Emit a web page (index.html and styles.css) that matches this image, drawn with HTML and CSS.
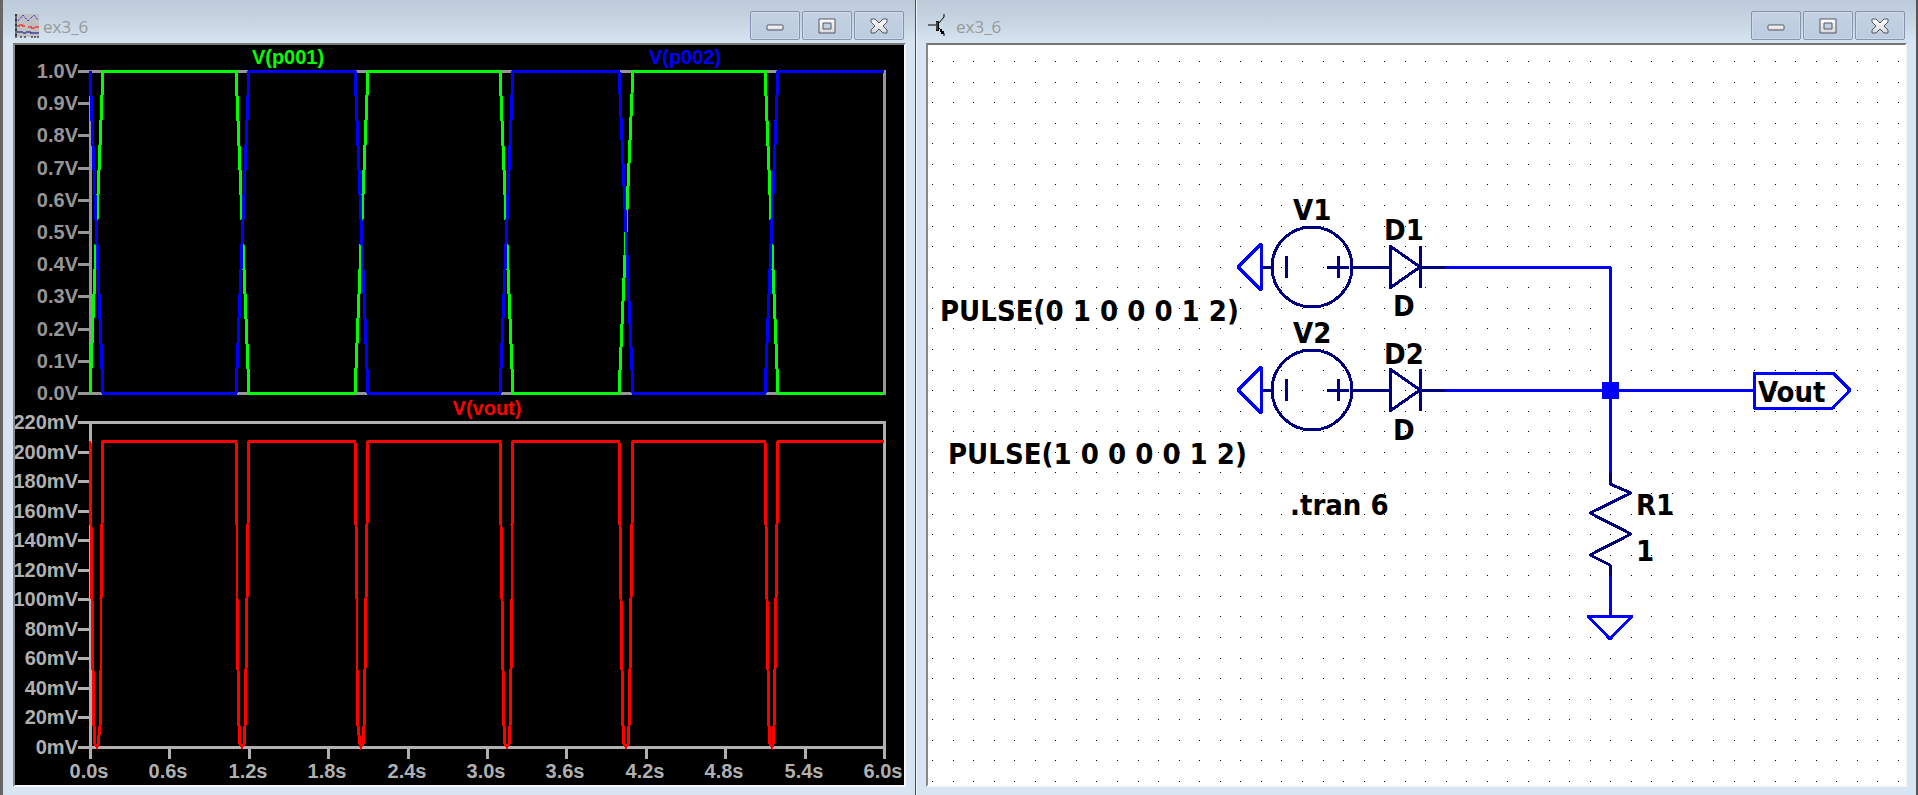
FILE: index.html
```html
<!DOCTYPE html>
<html lang="en">
<head>
    <meta charset="UTF-8">
    <meta name="viewport" content="width=device-width, initial-scale=1.0">
    <title>ex3_6</title>
    <link rel="stylesheet" href="styles.css">
</head>
<body>
    <!-- icons shared by both title bars -->
    <svg class="defs" aria-hidden="true">
        <defs>
            <linearGradient id="face" x1="0" y1="0" x2="0" y2="1">
                <stop offset="0" stop-color="#ffffff"/>
                <stop offset="1" stop-color="#d8d8d8"/>
            </linearGradient>
            <symbol id="icon-min" viewBox="0 0 20 18">
                <rect x="2" y="8" width="16" height="5" rx="1" fill="url(#face)" stroke="#535666"/>
            </symbol>
            <symbol id="icon-max" viewBox="0 0 20 18">
                <path d="M2 2H18V16H2ZM6 6V12H14V6Z" fill="url(#face)" fill-rule="evenodd" stroke="#535666" stroke-linejoin="round"/>
            </symbol>
            <symbol id="icon-close" viewBox="0 0 20 18">
                <path d="M2 2H6L10 6L14 2H18V5L14 9L18 13V16H14L10 12L6 16H2V13L6 9L2 5Z" fill="url(#face)" stroke="#535666" stroke-linejoin="round"/>
            </symbol>
        </defs>
    </svg>

    <main class="workspace">
        <section class="window window-plot">
            <header class="titlebar">
                <svg class="app-icon" viewBox="0 0 24 24">
                    <rect x="2" width="22" height="23" fill="#c0c0c0"/>
                    <path d="M1 0V24M0 1H2M0 6H2M0 11H2M0 16H2M0 21H2M6 22V24M10 22V24M17 22V24M20 22V24M23 22V24" stroke="#000" stroke-width="1"/>
                    <path d="M3 7L8 1L13 7L19 1L23 6" fill="none" stroke="#0000e0" stroke-width="1" stroke-dasharray="1 1"/>
                    <path d="M2 12H5M4 11H8M7 12H10M13 13H17M16 14H20M20 13H24" stroke="#f00" stroke-width="1"/>
                    <path d="M2 18H8M8 19H11M11 18H16M15 19H24" stroke="#000080" stroke-width="1"/>
                </svg>
                <h1 class="title">ex3_6</h1>
                <div class="controls">
                    <button class="control" type="button" aria-label="Minimize"><svg class="glyph"><use href="#icon-min"/></svg></button>
                    <button class="control" type="button" aria-label="Maximize"><svg class="glyph"><use href="#icon-max"/></svg></button>
                    <button class="control" type="button" aria-label="Close"><svg class="glyph"><use href="#icon-close"/></svg></button>
                </div>
            </header>
            <div class="client client-plot">
                <svg id="plot" class="canvas" viewBox="0 0 889 740" role="img" aria-label="Waveforms"></svg>
            </div>
        </section>

        <section class="window window-schematic">
            <header class="titlebar">
                <svg class="app-icon" viewBox="0 0 24 24">
                    <path d="M0 11H9" stroke="#000" stroke-width="1"/>
                    <rect x="8" y="7" width="3" height="10" fill="#000"/>
                    <path d="M9 8V16" stroke="#808080" stroke-width="1"/>
                    <path d="M11 9L16 3V0M11 14L16 19V22" fill="none" stroke="#000" stroke-width="1"/>
                    <path d="M12 15H14V17H16V20H13V18H12Z" fill="#000"/>
                </svg>
                <h1 class="title">ex3_6</h1>
                <div class="controls">
                    <button class="control" type="button" aria-label="Minimize"><svg class="glyph"><use href="#icon-min"/></svg></button>
                    <button class="control" type="button" aria-label="Maximize"><svg class="glyph"><use href="#icon-max"/></svg></button>
                    <button class="control" type="button" aria-label="Close"><svg class="glyph"><use href="#icon-close"/></svg></button>
                </div>
            </header>
            <div class="client client-schematic">
                <svg class="canvas" viewBox="0 0 977 740" role="img" aria-label="Schematic">
                    <defs>
                        <!-- grounded source in series with a diode, origin at the ground tip -->
                        <g id="branch">
                            <path class="wire" d="M0 0L23 -23V23Z"/>
                            <path class="part" d="M25 0H34M48 -11V11M89 0H111M100 -11V11M115 0H152M152 -21V21L182 0ZM182 -21V21M182 0H208"/>
                            <circle class="part" cx="74" cy="0" r="40"/>
                        </g>
                    </defs>
                    <path id="grid" class="grid"/>
                    <use href="#branch" x="310" y="222"/>
                    <use href="#branch" x="310" y="345"/>
                    <path class="wire" d="M518 222H682V429M518 345H826M682 530V571"/>
                    <path class="wire" d="M660 571H704L682 594Z"/>
                    <path class="wire" d="M826 328H905L922 345L905 363H826Z"/>
                    <path class="part" d="M682 428V439L703 448L662 468L703 489L662 510L682 520V531"/>
                    <rect class="node" x="674" y="337" width="17" height="17"/>
                    <g class="label">
                        <text x="365" y="175">V1</text>
                        <text x="456" y="195">D1</text>
                        <text x="465" y="271">D</text>
                        <text x="12" y="276">PULSE(0 1 0 0 0 1 2)</text>
                        <text x="365" y="298">V2</text>
                        <text x="456" y="319">D2</text>
                        <text x="465" y="395">D</text>
                        <text x="20" y="419">PULSE(1 0 0 0 0 1 2)</text>
                        <text x="362" y="470">.tran 6</text>
                        <text x="830" y="357">Vout</text>
                        <text x="708" y="470">R1</text>
                        <text x="708" y="516">1</text>
                    </g>
                </svg>
            </div>
        </section>
    </main>
    <script src="app.js"></script>
</body>
</html>
```
FILE: styles.css
```css
* {
    box-sizing: border-box;
}
body {
    margin: 0;
    background: #d7e4f2;
    font-family: "Open Sans", "Noto Sans", sans-serif;
}
.defs {
    position: absolute;
    width: 0;
    height: 0;
}
.workspace {
    display: grid;
    grid-template-columns: 916fr 1002fr;
    height: 100vh;
}
.window {
    display: flex;
    flex-direction: column;
    min-width: 0;
    padding-bottom: 8px;
    background: linear-gradient(#bccad9, #c9d6e4 24px, #d7e4f2 43px);
}
.window-plot {
    padding-left: 10px;
    padding-right: 9px;
    border-left: 3px solid #666;
    border-right: 1px solid #4c4c4c;
}
.window-schematic {
    padding-left: 9px;
    padding-right: 9px;
    border-left: 1px solid #f4f8fc;
    border-right: 2px solid #555;
}
.titlebar {
    display: flex;
    align-items: center;
    height: 43px;
    padding: 8px 2px 0;
}
.app-icon {
    width: 24px;
    height: 24px;
}
.title {
    margin: 2px auto 0 4px;
    color: #999;
    font-size: 17px;
    font-weight: 400;
    line-height: 24px;
}
.controls {
    display: flex;
    gap: 2px;
}
.control {
    display: flex;
    align-items: center;
    justify-content: center;
    width: 50px;
    height: 29px;
    padding: 0;
    border: 1px solid #8593ae;
    border-radius: 2px;
    background: linear-gradient(#c4d2e2, #bccbde);
    box-shadow: inset 0 0 0 1px #ccd9e8;
}
.glyph {
    width: 20px;
    height: 18px;
}
.client {
    flex: 1;
    min-height: 0;
    border: 2px solid #f8f8f8;
    border-top-color: #777;
    border-left-color: #888;
}
.client-plot {
    background: #000;
}
.client-schematic {
    background: #fff;
}
.canvas {
    display: block;
    width: 100%;
    height: 100%;
}

/* waveform window */
.axis,
.trace {
    fill: none;
    stroke-width: 3px;
    shape-rendering: crispEdges;
}
.tick-label,
.trace-label {
    font-family: "Liberation Sans", Arial, sans-serif;
    font-size: 20px;
    font-weight: 700;
}
.trace-label,
.time-label {
    text-anchor: middle;
}
.value-label {
    text-anchor: end;
}
.upper {
    stroke: #969696;
}
.lower {
    stroke: #b0b0b0;
}
.tick-label.upper {
    fill: #969696;
    stroke: none;
}
.tick-label.lower {
    fill: #b0b0b0;
    stroke: none;
}

/* schematic window */
.grid {
    fill: #000;
    shape-rendering: crispEdges;
}
.wire,
.part {
    fill: none;
    stroke-width: 3px;
    stroke-linejoin: round;
    shape-rendering: crispEdges;
}
.wire {
    stroke: #00f;
}
.part {
    stroke: #000080;
}
.node {
    fill: #00f;
}
.label {
    font-family: "DejaVu Sans Condensed", "DejaVu Sans", sans-serif;
    font-size: 29px;
    font-weight: 700;
}
```
FILE: app.js
```js
const SVG_NS = 'http://www.w3.org/2000/svg';
const plot = document.getElementById('plot');

const LEFT = 75;
const RIGHT = 869;
const T_END = 6;
const upper = { top: 26, bottom: 348, max: 1, name: 'upper' };
const lower = { top: 377, bottom: 702, max: 220, name: 'lower' };

function add(tag, attrs, text) {
    const el = document.createElementNS(SVG_NS, tag);
    for (const key in attrs) el.setAttribute(key, attrs[key]);
    if (text) el.textContent = text;
    plot.appendChild(el);
}

const timeX = t => Math.round(LEFT + t / T_END * (RIGHT - LEFT));
const valueY = (pane, v) => Math.round(pane.bottom - v / pane.max * (pane.bottom - pane.top));

function drawPane(pane, count, format) {
    let d = `M${LEFT} ${pane.top}H${RIGHT}V${pane.bottom}H${LEFT}Z`;
    for (let i = 0; i <= count; i++) {
        const y = valueY(pane, pane.max * i / count);
        d += `M${LEFT - 12} ${y}H${LEFT}`;
        add('text', { class: `tick-label value-label ${pane.name}`, x: LEFT - 12, y: y + 7 }, format(i));
    }
    add('path', { class: `axis ${pane.name}`, d });
}

function drawTrace(pane, points, color, label, labelX) {
    const d = points.map(([t, v]) => `${timeX(t)} ${valueY(pane, v)}`).join('L');
    add('path', { class: 'trace', stroke: color, d: 'M' + d });
    add('text', { class: 'trace-label', fill: color, x: labelX, y: pane.top - 7 }, label);
}

drawPane(upper, 10, i => (i / 10).toFixed(1) + 'V');
drawPane(lower, 11, i => i * 20 + 'mV');

// time axis
for (let i = 0; i <= 10; i++) {
    const x = timeX(i * 0.6);
    add('path', { class: 'axis lower', d: `M${x} ${lower.bottom}V${lower.bottom + 12}` });
    add('text', { class: 'tick-label time-label lower', x: x - 1, y: lower.bottom + 31 }, (i * 0.6).toFixed(1) + 's');
}

// period 2s, 0.1s edges; the second source is the inverse of the first
const pulse = [];
for (let t = 0; t < T_END; t += 2) {
    pulse.push([t, 0], [t + 0.1, 1], [t + 1.1, 1], [t + 1.2, 0]);
}
pulse.push([T_END, 0]);
drawTrace(upper, pulse, '#00ff00', 'V(p001)', 273);
drawTrace(upper, pulse.map(([t, v]) => [t, 1 - v]), '#0000ff', 'V(p002)', 670);

// output dips whenever the two sources cross: [seconds from centre, mV]
const dip = [[0.05, 207], [0.042, 150], [0.036, 100], [0.03, 52], [0.022, 14], [0.013, 2], [0, 0]];
const vout = [];
for (const centre of [0.05, 1.15, 2.05, 3.15, 4.05, 5.15]) {
    dip.forEach(([dt, v]) => vout.push([centre - dt, v]));
    dip.slice().reverse().forEach(([dt, v]) => vout.push([centre + dt, v]));
}
vout.push([T_END, 207]);
drawTrace(lower, vout, '#ff0000', 'V(vout)', 472);

// schematic grid dots, snapped to whole pixels
let dots = '';
for (let row = 0; row < 36; row++) {
    for (let col = 0; col < 48; col++) {
        const x = Math.round(4 + col * 966 / 47);
        const y = Math.round(16 + row * 720 / 35);
        dots += `M${x} ${y}h1v1h-1z`;
    }
}
document.getElementById('grid').setAttribute('d', dots);
```
